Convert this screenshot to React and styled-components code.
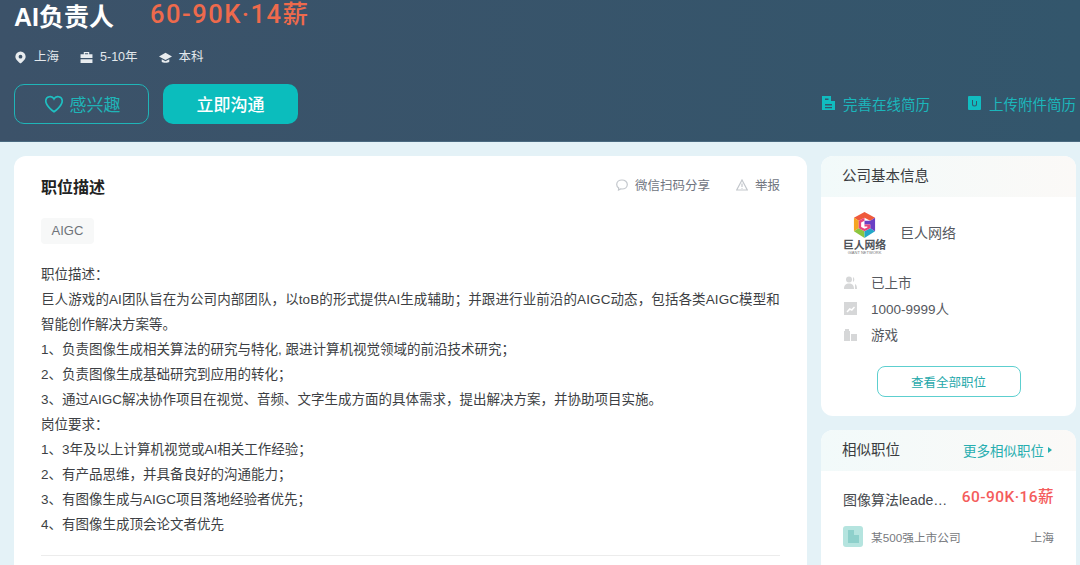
import styled, {createGlobalStyle} from "styled-components";

const GlobalStyle = createGlobalStyle`
    html, body {
        margin: 0;
        padding: 0;
        height: 565px;
        overflow: hidden;
        background: #e4f2f7;
        font-family: "Liberation Sans", "Noto Sans CJK SC", sans-serif;
    }
    * {
        box-sizing: border-box;
    }
`;

const Banner = styled.header`
    height: 142px;
    padding: 0 4px 0 14px;
    background: linear-gradient(90deg, #3c5269 0%, #33566c 100%);
    box-shadow: inset 0 -1px 0 #4a6a80;
`;

const TitleRow = styled.div`
    display: flex;
    align-items: flex-start;
    height: 34px;
    gap: 36px;
`;

const JobTitle = styled.h1`
    margin: 3px 0 0;
    font-size: 25px;
    line-height: 28px;
    font-weight: 700;
    color: #fff;
`;

const Salary = styled.div`
    font-family: "Roboto", "Noto Sans CJK SC", sans-serif;
    font-size: 25.5px;
    font-weight: 500;
    line-height: 30px;
    letter-spacing: 1.5px;
    margin-top: -1px;
    color: #ee6a4c;
`;

const Meta = styled.div`
    display: flex;
    gap: 21px;
    margin-top: 14px;
    height: 18px;
    align-items: center;
`;

const MetaItem = styled.span`
    display: inline-flex;
    align-items: center;
    gap: 7px;
    font-size: 12.5px;
    line-height: 18px;
    color: #e3e8ec;

    svg {
        width: 13px;
        height: 13px;
        fill: #e8ecef;
    }
`;

const ActionRow = styled.div`
    display: flex;
    align-items: center;
    margin-top: 18px;
`;

const Interest = styled.button`
    display: flex;
    align-items: center;
    justify-content: center;
    gap: 5px;
    width: 135px;
    height: 40px;
    padding: 0 0 1px;
    border: 1px solid #1fb5b8;
    border-radius: 10px;
    background: transparent;
    color: #1fb5b8;
    font: inherit;
    font-size: 17px;

    svg {
        width: 22px;
        height: 22px;
        stroke: #1fc0c2;
        fill: none;
        stroke-width: 1.8;
    }
`;

const Chat = styled.button`
    width: 135px;
    height: 40px;
    margin-left: 14px;
    padding: 0 0 2px;
    border: 0;
    border-radius: 10px;
    background: #0bbdbd;
    color: #fff;
    font: inherit;
    font-size: 17px;
    font-weight: 500;
`;

const ResumeLinks = styled.div`
    display: flex;
    gap: 38px;
    margin-left: auto;
    padding-bottom: 2px;
`;

const ResumeLink = styled.a`
    display: inline-flex;
    align-items: center;
    gap: 8px;
    font-size: 14.5px;
    color: #1bb6bb;

    svg {
        width: 13px;
        height: 14px;
        fill: #11bcc0;
    }
`;

const Columns = styled.main`
    display: flex;
    gap: 14px;
    padding: 14px 4px 0 14px;
    align-items: flex-start;
`;

const MainCard = styled.section`
    width: 793px;
    height: 409px;
    padding: 0 27px;
    background: #fff;
    border-radius: 12px 12px 0 0;
`;

const CardHead = styled.div`
    display: flex;
    align-items: center;
    height: 62px;
    padding-bottom: 2px;
`;

const SectionTitle = styled.h2`
    margin: 0;
    font-size: 16px;
    font-weight: 700;
    color: #222;
`;

const HeadTools = styled.div`
    display: flex;
    gap: 26px;
    margin-left: auto;
    margin-top: -3px;
`;

const Tool = styled.span`
    display: inline-flex;
    align-items: center;
    gap: 7px;
    font-size: 12.5px;
    color: #70757f;

    svg {
        width: 12px;
        height: 12px;
        fill: none;
        stroke: #c3c7cc;
        stroke-width: 1.2;
    }
`;

const Tag = styled.span`
    display: inline-block;
    height: 26px;
    padding: 0 10.5px;
    border-radius: 4px;
    background: #f7f8f8;
    color: #6f7378;
    font-size: 13px;
    line-height: 26px;
`;

const Description = styled.div`
    margin-top: 18px;
    font-size: 13.5px;
    line-height: 25px;
    color: #3d3f44;
    padding-bottom: 18px;
    border-bottom: 1px solid #ececec;
`;

const DescLine = styled.div`
    white-space: nowrap;
    letter-spacing: ${(props) => props.$spread || 0}px;
`;

const Sidebar = styled.aside`
    display: flex;
    flex-direction: column;
    gap: 14px;
    width: 255px;
`;

const SideCard = styled.section`
    background: #fff;
    border-radius: 12px;
    overflow: hidden;
`;

const SideHead = styled.div`
    display: flex;
    align-items: center;
    justify-content: space-between;
    height: 41px;
    padding: 0 24px 4px 21px;
    background: linear-gradient(90deg, #f2fafa 0%, #fbf9f7 100%);
`;

const SideTitle = styled.h3`
    margin: 0;
    font-size: 14.5px;
    font-weight: 400;
    color: #3a3c40;
`;

const MoreLink = styled.a`
    display: inline-flex;
    align-items: center;
    gap: 4px;
    margin-top: 2px;
    font-size: 13.5px;
    color: #27aeb0;

    &::after {
        content: "";
        border-left: 4px solid #27aeb0;
        border-top: 3px solid transparent;
        border-bottom: 3px solid transparent;
    }
`;

const CompanyRow = styled.div`
    display: flex;
    align-items: center;
    gap: 13px;
    padding: 12px 21px 0;
`;

const Logo = styled.div`
    display: flex;
    flex-direction: column;
    align-items: center;
    width: 45px;
    height: 46px;
    padding-top: 3px;

    svg {
        width: 25px;
        height: 26px;
    }
`;

const LogoName = styled.span`
    margin-top: 1px;
    font-size: 10.8px;
    line-height: 12px;
    font-weight: 700;
    white-space: nowrap;
    color: #50545a;
`;

const LogoSub = styled.span`
    font-size: 4px;
    line-height: 4px;
    white-space: nowrap;
    color: #777;
`;

const CompanyName = styled.span`
    font-size: 14px;
    color: #55585e;
`;

const Facts = styled.div`
    display: flex;
    flex-direction: column;
    margin-top: 14px;
    padding: 0 23px;
`;

const Fact = styled.div`
    display: flex;
    align-items: center;
    gap: 14px;
    height: 26px;
    font-size: 13.5px;
    color: #55585e;

    svg {
        width: 13px;
        height: 13px;
        fill: #d6d7d8;
    }
`;

const AllJobs = styled.button`
    display: block;
    width: 144px;
    height: 31px;
    margin: 19px auto 19px;
    padding: 0;
    border: 1px solid #5dcfcf;
    border-radius: 8px;
    background: #fff;
    color: #27a9ab;
    font: inherit;
    font-size: 12.5px;
`;

const SimilarBody = styled.div`
    padding: 0 22px;
    height: 94px;
`;

const SimilarTop = styled.div`
    display: flex;
    align-items: center;
    justify-content: space-between;
    height: 34px;
    margin-top: 11px;
    white-space: nowrap;
`;

const SimilarName = styled.span`
    font-size: 14px;
    color: #45484d;
`;

const SimilarPay = styled.span`
    margin-bottom: 9px;
    font-family: "Roboto", "Noto Sans CJK SC", sans-serif;
    font-size: 15.5px;
    font-weight: 500;
    letter-spacing: 0.45px;
    color: #f45c5c;
`;

const SimilarBottom = styled.div`
    display: flex;
    align-items: center;
    gap: 8px;
    margin-top: 10px;
    font-size: 11.7px;
    color: #777a80;
`;

const SimilarLogo = styled.div`
    width: 20px;
    height: 21px;
    border-radius: 3px;
    background: #b5e4df;
    display: flex;
    align-items: center;
    justify-content: center;

    svg {
        width: 11px;
        height: 13px;
        fill: #8ed0cb;
    }
`;

const City = styled.span`
    margin-left: auto;
`;

const descLines = [
    {text: "职位描述："},
    {
        text: "巨人游戏的AI团队旨在为公司内部团队，以toB的形式提供AI生成辅助；并跟进行业前沿的AIGC动态，包括各类AIGC模型和",
        spread: 0.1,
    },
    {text: "智能创作解决方案等。"},
    {text: "1、负责图像生成相关算法的研究与特化, 跟进计算机视觉领域的前沿技术研究；"},
    {text: "2、负责图像生成基础研究到应用的转化；"},
    {text: "3、通过AIGC解决协作项目在视觉、音频、文字生成方面的具体需求，提出解决方案，并协助项目实施。"},
    {text: "岗位要求："},
    {text: "1、3年及以上计算机视觉或AI相关工作经验；"},
    {text: "2、有产品思维，并具备良好的沟通能力；"},
    {text: "3、有图像生成与AIGC项目落地经验者优先；"},
    {text: "4、有图像生成顶会论文者优先"},
];

function GiantLogo() {
    return (
        <svg viewBox="0 0 26 27">
            <path d="M13 0 L24 6 L19 9 L13 6 L7 9 L2 6 Z" fill="#ef5a3c" />
            <path d="M2 6 L7 9 L7 17 L2 20 Z" fill="#f5a623" />
            <path d="M2 20 L7 17 L13 20 L13 27 Z" fill="#8cc63f" />
            <path d="M13 27 L13 20 L19 17 L24 20 Z" fill="#22a7c9" />
            <path d="M24 6 L24 20 L19 17 L19 13 L13 13 L13 9 L19 9 Z" fill="#6a3fc4" />
            <path d="M7 9 L13 6 L13 9 L9.500 11 L9.500 15.500 L13 17.500 L16 16 L16 15 L13 15 L13 13 L19 13 L19 17 L13 20 L7 17 Z" fill="#e8467c" />
        </svg>
    );
}

export default function App() {
    return (
        <>
            <GlobalStyle />
            <Banner>
                <TitleRow>
                    <JobTitle>AI负责人</JobTitle>
                    <Salary>60-90K·14薪</Salary>
                </TitleRow>
                <Meta>
                    <MetaItem>
                        <svg viewBox="0 0 24 24">
                            <path d="M12 1a9.500 9.500 0 0 0-9.500 9.500C2.500 16.500 12 23 12 23s9.500-6.500 9.500-12.500A9.500 9.500 0 0 0 12 1zm0 13a3.500 3.500 0 1 1 0-7 3.500 3.500 0 0 1 0 7z" fillRule="evenodd" />
                        </svg>
                        上海
                    </MetaItem>
                    <MetaItem>
                        <svg viewBox="0 0 24 24">
                            <path d="M7 2h10v4h6v7H1V6h6zm2 2v2h6V4zM1 15h22v7H1z" fillRule="evenodd" />
                        </svg>
                        5-10年
                    </MetaItem>
                    <MetaItem>
                        <svg viewBox="0 0 24 24">
                            <path d="M12 3 0 10l12 6.500L24 10zM5 15v5c2 2.500 12 2.500 14 0v-5l-7 4z" />
                        </svg>
                        本科
                    </MetaItem>
                </Meta>
                <ActionRow>
                    <Interest>
                        <svg viewBox="0 0 24 24">
                            <path d="M12 20.500S3 14.500 3 8.500A4.800 4.800 0 0 1 12 6.500 4.800 4.800 0 0 1 21 8.500C21 14.500 12 20.500 12 20.500z" />
                        </svg>
                        感兴趣
                    </Interest>
                    <Chat>立即沟通</Chat>
                    <ResumeLinks>
                        <ResumeLink>
                            <svg viewBox="0 0 13 14">
                                <path d="M0 0h9v5h4v9H0zM3 2.500v1.500h3.500V2.500zM3 8v1.500h7V8zM3 11v1.200h7V11z" fillRule="evenodd" />
                            </svg>
                            完善在线简历
                        </ResumeLink>
                        <ResumeLink>
                            <svg viewBox="0 0 13 14">
                                <path d="M1 0h11a1 1 0 0 1 1 1v12a1 1 0 0 1-1 1H1a1 1 0 0 1-1-1V1a1 1 0 0 1 1-1zm3 4v4a2.500 2.500 0 0 0 5 0V5H8v3a1.500 1.500 0 0 1-3 0V4z" fillRule="evenodd" />
                            </svg>
                            上传附件简历
                        </ResumeLink>
                    </ResumeLinks>
                </ActionRow>
            </Banner>
            <Columns>
                <MainCard>
                    <CardHead>
                        <SectionTitle>职位描述</SectionTitle>
                        <HeadTools>
                            <Tool>
                                <svg viewBox="0 0 12 12">
                                    <path d="M6 1C3 1 .7 3 .7 5.500c0 1.500.8 2.700 2 3.500l-.2 2 2.200-1.100c.4.100.9.100 1.300.100 3 0 5.300-2 5.300-4.500S9 1 6 1z" />
                                </svg>
                                微信扫码分享
                            </Tool>
                            <Tool>
                                <svg viewBox="0 0 12 12">
                                    <path d="M6 1 .7 11h10.600zM6 4.500v3.500M6 9v.8" />
                                </svg>
                                举报
                            </Tool>
                        </HeadTools>
                    </CardHead>
                    <Tag>AIGC</Tag>
                    <Description>
                        {descLines.map((line) => (
                            <DescLine key={line.text} $spread={line.spread}>
                                {line.text}
                            </DescLine>
                        ))}
                    </Description>
                </MainCard>
                <Sidebar>
                    <SideCard>
                        <SideHead>
                            <SideTitle>公司基本信息</SideTitle>
                        </SideHead>
                        <CompanyRow>
                            <Logo>
                                <GiantLogo />
                                <LogoName>巨人网络</LogoName>
                                <LogoSub>GIANT NETWORK</LogoSub>
                            </Logo>
                            <CompanyName>巨人网络</CompanyName>
                        </CompanyRow>
                        <Facts>
                            <Fact>
                                <svg viewBox="0 0 13 13">
                                    <circle cx="5" cy="3.500" r="3" />
                                    <path d="M0 13c0-4 2-5.500 5-5.500s5 1.500 5 5.500zM9 1a3 3 0 0 1 0 5zM11 8c1.500.8 2 2.500 2 5h-2z" />
                                </svg>
                                已上市
                            </Fact>
                            <Fact>
                                <svg viewBox="0 0 13 13">
                                    <path d="M0 0h13v13H0zM2.500 9.500 3.500 10.500 6 8l2 1 3-3.500-1-1L7.500 7l-2-1z" fillRule="evenodd" />
                                </svg>
                                1000-9999人
                            </Fact>
                            <Fact>
                                <svg viewBox="0 0 13 13">
                                    <path d="M0 3h6v10H0zM1 1h4v2H1zM7 6h6v7H7z" />
                                </svg>
                                游戏
                            </Fact>
                        </Facts>
                        <AllJobs>查看全部职位</AllJobs>
                    </SideCard>
                    <SideCard>
                        <SideHead>
                            <SideTitle>相似职位</SideTitle>
                            <MoreLink>更多相似职位</MoreLink>
                        </SideHead>
                        <SimilarBody>
                            <SimilarTop>
                                <SimilarName>图像算法leade…</SimilarName>
                                <SimilarPay>60-90K·16薪</SimilarPay>
                            </SimilarTop>
                            <SimilarBottom>
                                <SimilarLogo>
                                    <svg viewBox="0 0 11 13">
                                        <path d="M0 0h6v5h5v8H0z" />
                                    </svg>
                                </SimilarLogo>
                                某500强上市公司
                                <City>上海</City>
                            </SimilarBottom>
                        </SimilarBody>
                    </SideCard>
                </Sidebar>
            </Columns>
        </>
    );
}
